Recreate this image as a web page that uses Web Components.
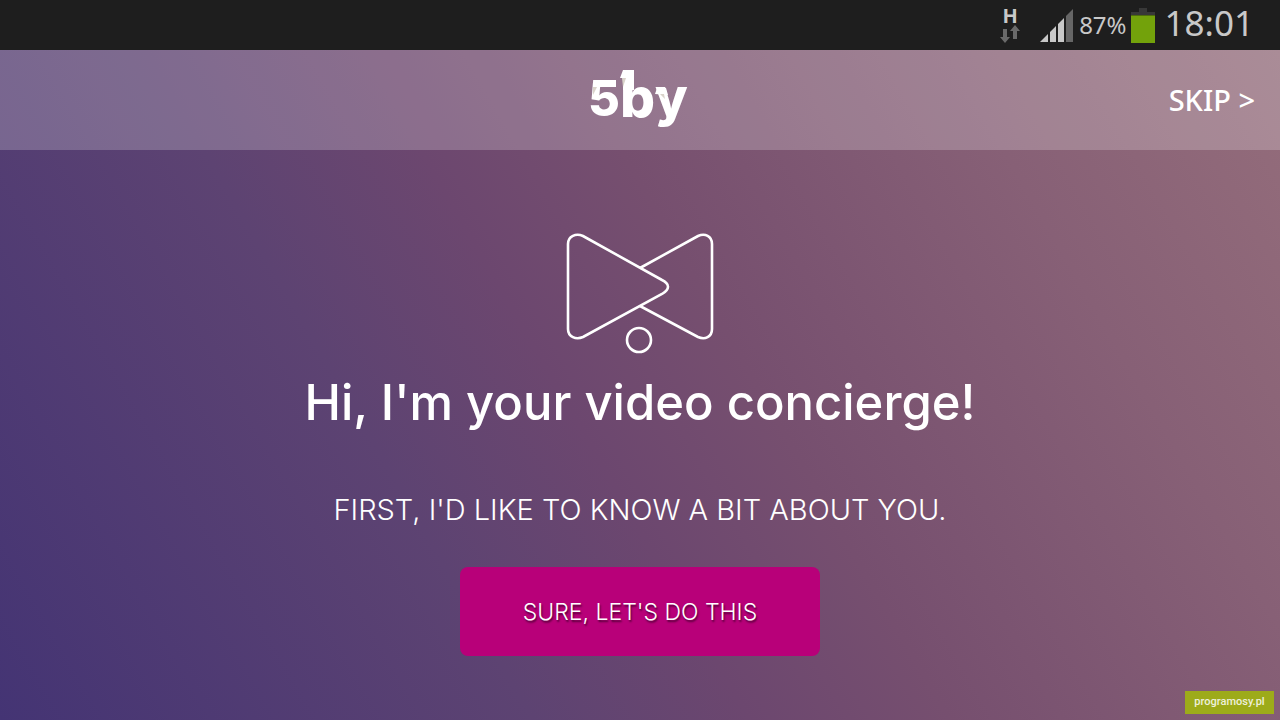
<!DOCTYPE html>
<html lang="en">
<head>
<meta charset="utf-8">
<meta name="viewport" content="width=device-width, initial-scale=1">
<title>5by</title>
<style>
html,body{margin:0;min-height:100%}
body{font-family:"Inter",sans-serif;color:#fff;background:#1e1e1e}
</style>
</head>
<body>
<welcome-screen></welcome-screen>
<script>
function define(name, html){
  const template = document.createElement('template');
  template.innerHTML = html;
  customElements.define(name, class extends HTMLElement{
    constructor(){
      super();
      this.attachShadow({mode:'open'}).append(template.content.cloneNode(true));
    }
  });
}

define('status-bar', `
<style>
:host{display:flex;align-items:center;justify-content:flex-end;height:50px;padding-right:26px;box-sizing:border-box;background:#1e1e1e;color:#c8c8c8;font-family:"Noto Sans",sans-serif;line-height:1}
svg{display:block;flex:none}
.net{display:grid;justify-items:center;width:20px;margin-right:20px;font:700 20px/20px "Noto Sans",sans-serif}
.net span{height:18px;line-height:18px}
.pct{font-size:24px;margin:0 4px 0 6px}
time{font-size:35px;margin-left:10px;padding-bottom:6px}
</style>
<div class="net"><span>H</span><svg width="20" height="18" viewBox="0 0 20 18" fill="#6a6a6a"><path d="M3 4h4v8h3l-5 6-5-6h3zM15 0l5 6h-3v8h-4V6h-3z"/></svg></div>
<svg width="33" height="33" viewBox="0 0 33 33" fill="#c8c8c8"><path d="M0 33l8-8v8zM10 33V23l6-6v16zM18 33V15l6-6v24z"/><path fill="#666" d="M26 33V7l7-7v33z"/></svg>
<span class="pct">87%</span>
<svg width="24" height="35" viewBox="0 0 24 35"><path fill="#383838" d="M8 0h8v4h8v3H0V4h8z"/><path fill="#73a20b" d="M0 7h24v28H0z"/><path fill="#4e6d0c" d="M0 7h24v1H0z"/></svg>
<time>18:01</time>`);

define('brand-logo', `
<style>:host{display:block}svg{display:block}text{font-family:"Inter",sans-serif;font-weight:800;fill:#fff}</style>
<svg width="102" height="80" viewBox="0 -10 102 80" role="img" aria-label="5by">
<text x="-1" y="48" font-size="49">5</text>
<text x="31" y="49" font-size="55">b</text>
<text x="66" y="48" font-size="53">y</text>
<path fill="#fff" d="M7 12h20v7H4zM34 2h11v20H34V10H31zM68 20h9l2 7-13-1z"/>
<path fill="#d9d3ca" d="M4 19h4L4 27zM33 10h4l-3 9zM71 26h4l1 5z"/>
</svg>`);

define('top-bar', `
<style>
:host{display:grid;grid-template-columns:1fr auto 1fr;align-items:start;height:100px;padding:8px 25px 0;box-sizing:border-box;background:rgba(255,255,255,.21)}
brand-logo{grid-column:2}
a{justify-self:end;margin-top:22px;color:#fff;text-decoration:none;font:500 29px/40px "Noto Sans",sans-serif}
</style>
<brand-logo></brand-logo><a href="#skip"><slot></slot></a>`);

define('concierge-mark', `
<style>:host{display:block}svg{display:block}</style>
<svg width="150" height="124" viewBox="0 0 150 124" fill="none" stroke="#fff" stroke-width="2.6" aria-hidden="true">
<path d="M3 13C3 5 11 2 18 5L97 49C105 53 105 58 97 63L18 106C11 109 3 106 3 98Z"/>
<path d="M75 37L133 5C140 2 147 5 147 13V98C147 106 140 109 133 106L75 75"/>
<circle cx="74" cy="109" r="12"/>
</svg>`);

define('primary-button', `
<style>
:host{display:block}
button{display:block;width:360px;max-width:100%;height:89px;padding:0;border:0;border-radius:8px;background:#b80079;color:#fff;font:300 23px/32px "Inter",sans-serif;text-shadow:1px 2px 2px rgba(0,0,0,.55)}
</style>
<button type="button"><slot></slot></button>`);

define('site-badge', `
<style>
:host{position:absolute;right:6px;bottom:6px;width:89px;height:23px;background:#9dab1a;color:#eef0dc;font:500 11px/22px "Roboto",sans-serif;text-align:center}
</style><slot></slot>`);

define('welcome-screen', `
<style>
:host{display:flex;flex-direction:column;min-height:100vh;position:relative}
.stage{flex:1;display:flex;flex-direction:column;background:linear-gradient(60deg,#443474 0%,#5d4372 32%,#6c476f 45%,#764f6f 57%,#876076 80%,#946d7b 100%)}
main{display:flex;flex-direction:column;align-items:center;text-align:center;padding:81px 20px 20px}
h1{margin:18px 0 0;font:500 49px/60px "Inter",sans-serif}
p{margin:57px 0 0;font:300 29px/40px "Inter",sans-serif}
primary-button{margin-top:37px}
</style>
<status-bar></status-bar>
<div class="stage">
<top-bar>SKIP &gt;</top-bar>
<main>
<concierge-mark></concierge-mark>
<h1>Hi, I'm your video concierge!</h1>
<p>FIRST, I'D LIKE TO KNOW A BIT ABOUT YOU.</p>
<primary-button>SURE, LET'S DO THIS</primary-button>
</main>
</div>
<site-badge>programosy.pl</site-badge>`);
</script>
</body>
</html>
